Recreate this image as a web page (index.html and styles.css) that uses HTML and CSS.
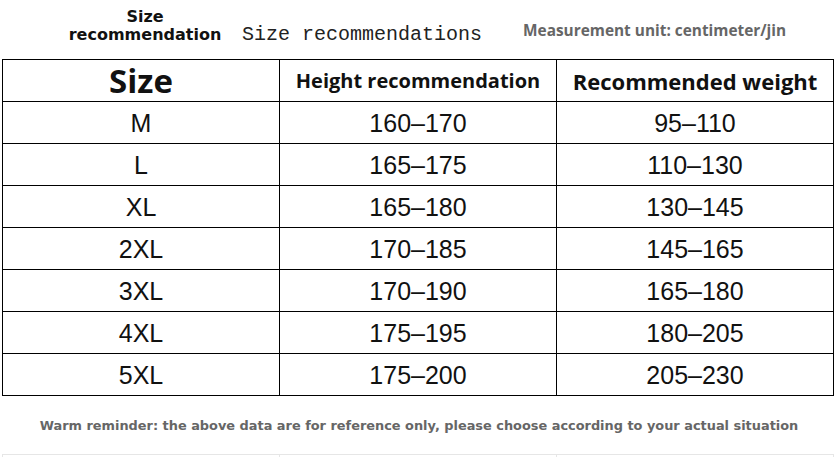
FILE: index.html
```html
<!DOCTYPE html>
<html lang="en">
<head>
<meta charset="utf-8">
<title>Size recommendation</title>
<link rel="stylesheet" href="styles.css">
</head>
<body>
<div class="page">
  <header class="top">
    <div class="title">
      <span>Size</span>
      <span>recommendation</span>
    </div>
    <div class="subtitle">Size recommendations</div>
    <div class="unit">Measurement unit: centimeter/jin</div>
  </header>
  <table class="chart">
    <thead>
      <tr>
        <th class="th-size">Size</th>
        <th class="th-height">Height recommendation</th>
        <th class="th-weight">Recommended weight</th>
      </tr>
    </thead>
    <tbody>
      <tr><td>M</td><td>160–170</td><td>95–110</td></tr>
      <tr><td>L</td><td>165–175</td><td>110–130</td></tr>
      <tr><td>XL</td><td>165–180</td><td>130–145</td></tr>
      <tr><td>2XL</td><td>170–185</td><td>145–165</td></tr>
      <tr><td>3XL</td><td>170–190</td><td>165–180</td></tr>
      <tr><td>4XL</td><td>175–195</td><td>180–205</td></tr>
      <tr><td>5XL</td><td>175–200</td><td>205–230</td></tr>
    </tbody>
  </table>
  <p class="note">Warm reminder: the above data are for reference only, please choose according to your actual situation</p>
  <div class="ghost">
    <div></div><div></div><div></div>
  </div>
</div>
</body>
</html>
```
FILE: styles.css
```css
html, body {
  margin: 0;
  padding: 0;
  background: #fff;
}
.page {
  width: 838px;
  height: 457px;
  overflow: hidden;
}
.top {
  height: 59px;
  display: flex;
  align-items: flex-start;
}
.title {
  width: 150px;
  margin-left: 70px;
  padding-top: 8px;
  display: flex;
  flex-direction: column;
  align-items: center;
  font-family: "DejaVu Sans", sans-serif;
  font-weight: bold;
  font-size: 16px;
  line-height: 18px;
  color: #111;
}
.subtitle {
  margin-left: 22px;
  padding-top: 23px;
  font-family: "Liberation Mono", monospace;
  font-size: 20px;
  line-height: 24px;
  color: #222;
}
.unit {
  margin-left: 41px;
  padding-top: 21px;
  font-family: "Open Sans", sans-serif;
  font-weight: bold;
  font-size: 15.4px;
  line-height: 20px;
  color: #666;
}
.chart {
  margin-left: 2px;
  width: 832px;
  border-collapse: collapse;
  table-layout: fixed;
  border: 1px solid #000;
}
.chart th, .chart td {
  border: 1px solid #000;
  height: 41px;
  padding: 0;
  text-align: center;
  vertical-align: middle;
  color: #111;
  line-height: 30px;
}
.chart th {
  font-family: "Open Sans", sans-serif;
  font-weight: bold;
  font-size: 20px;
}
.chart th.th-size {
  font-size: 33px;
}
.chart th.th-weight {
  font-size: 22px;
}
.chart td {
  font-family: "Liberation Sans", sans-serif;
  font-size: 25px;
}
.note {
  margin: 0;
  height: 58px;
  display: flex;
  align-items: center;
  justify-content: center;
  font-family: "DejaVu Sans", sans-serif;
  font-weight: bold;
  font-size: 12.9px;
  color: #666;
}
.ghost {
  margin-left: 2px;
  width: 832px;
  height: 20px;
  display: grid;
  grid-template-columns: 277px 277px 278px;
  border-top: 1px solid #e6e6e6;
}
.ghost div {
  border-left: 1px solid #e6e6e6;
}
.ghost div:last-child {
  border-right: 1px solid #e6e6e6;
}
```
